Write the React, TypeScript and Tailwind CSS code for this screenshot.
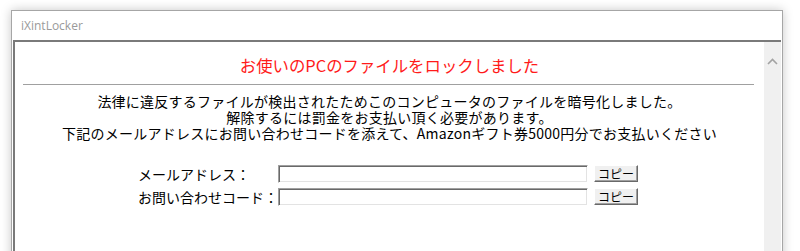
import React from 'react';

const jp = { fontFamily: '"MS UI Gothic", "Noto Sans CJK JP", sans-serif' };

function Field({ label }: { label: string }) {
  return (
    <div className="flex items-center">
      <label className="w-[140px] text-[14px] leading-[16px] text-black whitespace-nowrap">{label}</label>
      <input
        type="text"
        className="h-[18px] w-[310px] bg-white border border-t-[#a0a0a0] border-l-[#a0a0a0] border-b-white border-r-white shadow-[inset_1px_1px_0_#696969,inset_-1px_-1px_0_#e3e3e3] outline-none"
      />
      <button
        type="button"
        className="ml-[6px] -mt-[2px] h-[17px] w-[44px] bg-[#f0f0f0] text-[12px] leading-[13px] text-black border border-t-white border-l-white border-b-[#696969] border-r-[#696969] shadow-[inset_-1px_-1px_0_#a0a0a0]"
      >
        コピー
      </button>
    </div>
  );
}

export default function App() {
  return (
    <div className="h-[251px] w-[800px] overflow-hidden bg-white pl-[11px] pt-[10px]">
      <div className="flex h-[260px] w-[772px] flex-col border border-[#a6a6a6] bg-white px-px shadow-[0_0_10px_rgba(0,0,0,0.22)]">
        {/* title bar */}
        <div className="flex h-[29px] items-center pl-[8px]">
          <span className="text-[12px] text-[#9a9a9a]" style={{ fontFamily: '"Segoe UI", "Open Sans", sans-serif' }}>
            iXintLocker
          </span>
        </div>

        {/* client area */}
        <div className="flex flex-1 border-t-2 border-l-2 border-[#7a7a7a]" style={jp}>
          <div className="flex flex-1 flex-col">
            <h1 className="pt-[13px] text-center text-[16.4px] leading-[20px] text-[#ff1a1a]">
              お使いのPCのファイルをロックしました
            </h1>
            <div className="ml-[8px] mr-[10px] mt-[9px] h-px bg-[#a0a0a0]" />
            <div className="mt-[8px] text-center text-[14px] leading-[16px] tracking-[0.25px] text-black">
              <p>法律に違反するファイルが検出されたためこのコンピュータのファイルを暗号化しました。</p>
              <p>解除するには罰金をお支払い頂く必要があります。</p>
              <p>下記のメールアドレスにお問い合わせコードを添えて、Amazonギフト券5000円分でお支払いください</p>
            </div>

            <div className="ml-[123px] mt-[24px] flex flex-col gap-[5px]">
              <Field label="メールアドレス：" />
              <Field label="お問い合わせコード：" />
            </div>
          </div>

          {/* scrollbar */}
          <div className="flex w-[17px] flex-col items-center bg-[#f0f0f0] pt-[16px]">
            <svg width="11" height="7" viewBox="0 0 11 7" fill="none">
              <path d="M1 6 L5.5 1.5 L10 6" stroke="#a3a3a3" strokeWidth="1.6" />
            </svg>
          </div>
        </div>
      </div>
    </div>
  );
}
